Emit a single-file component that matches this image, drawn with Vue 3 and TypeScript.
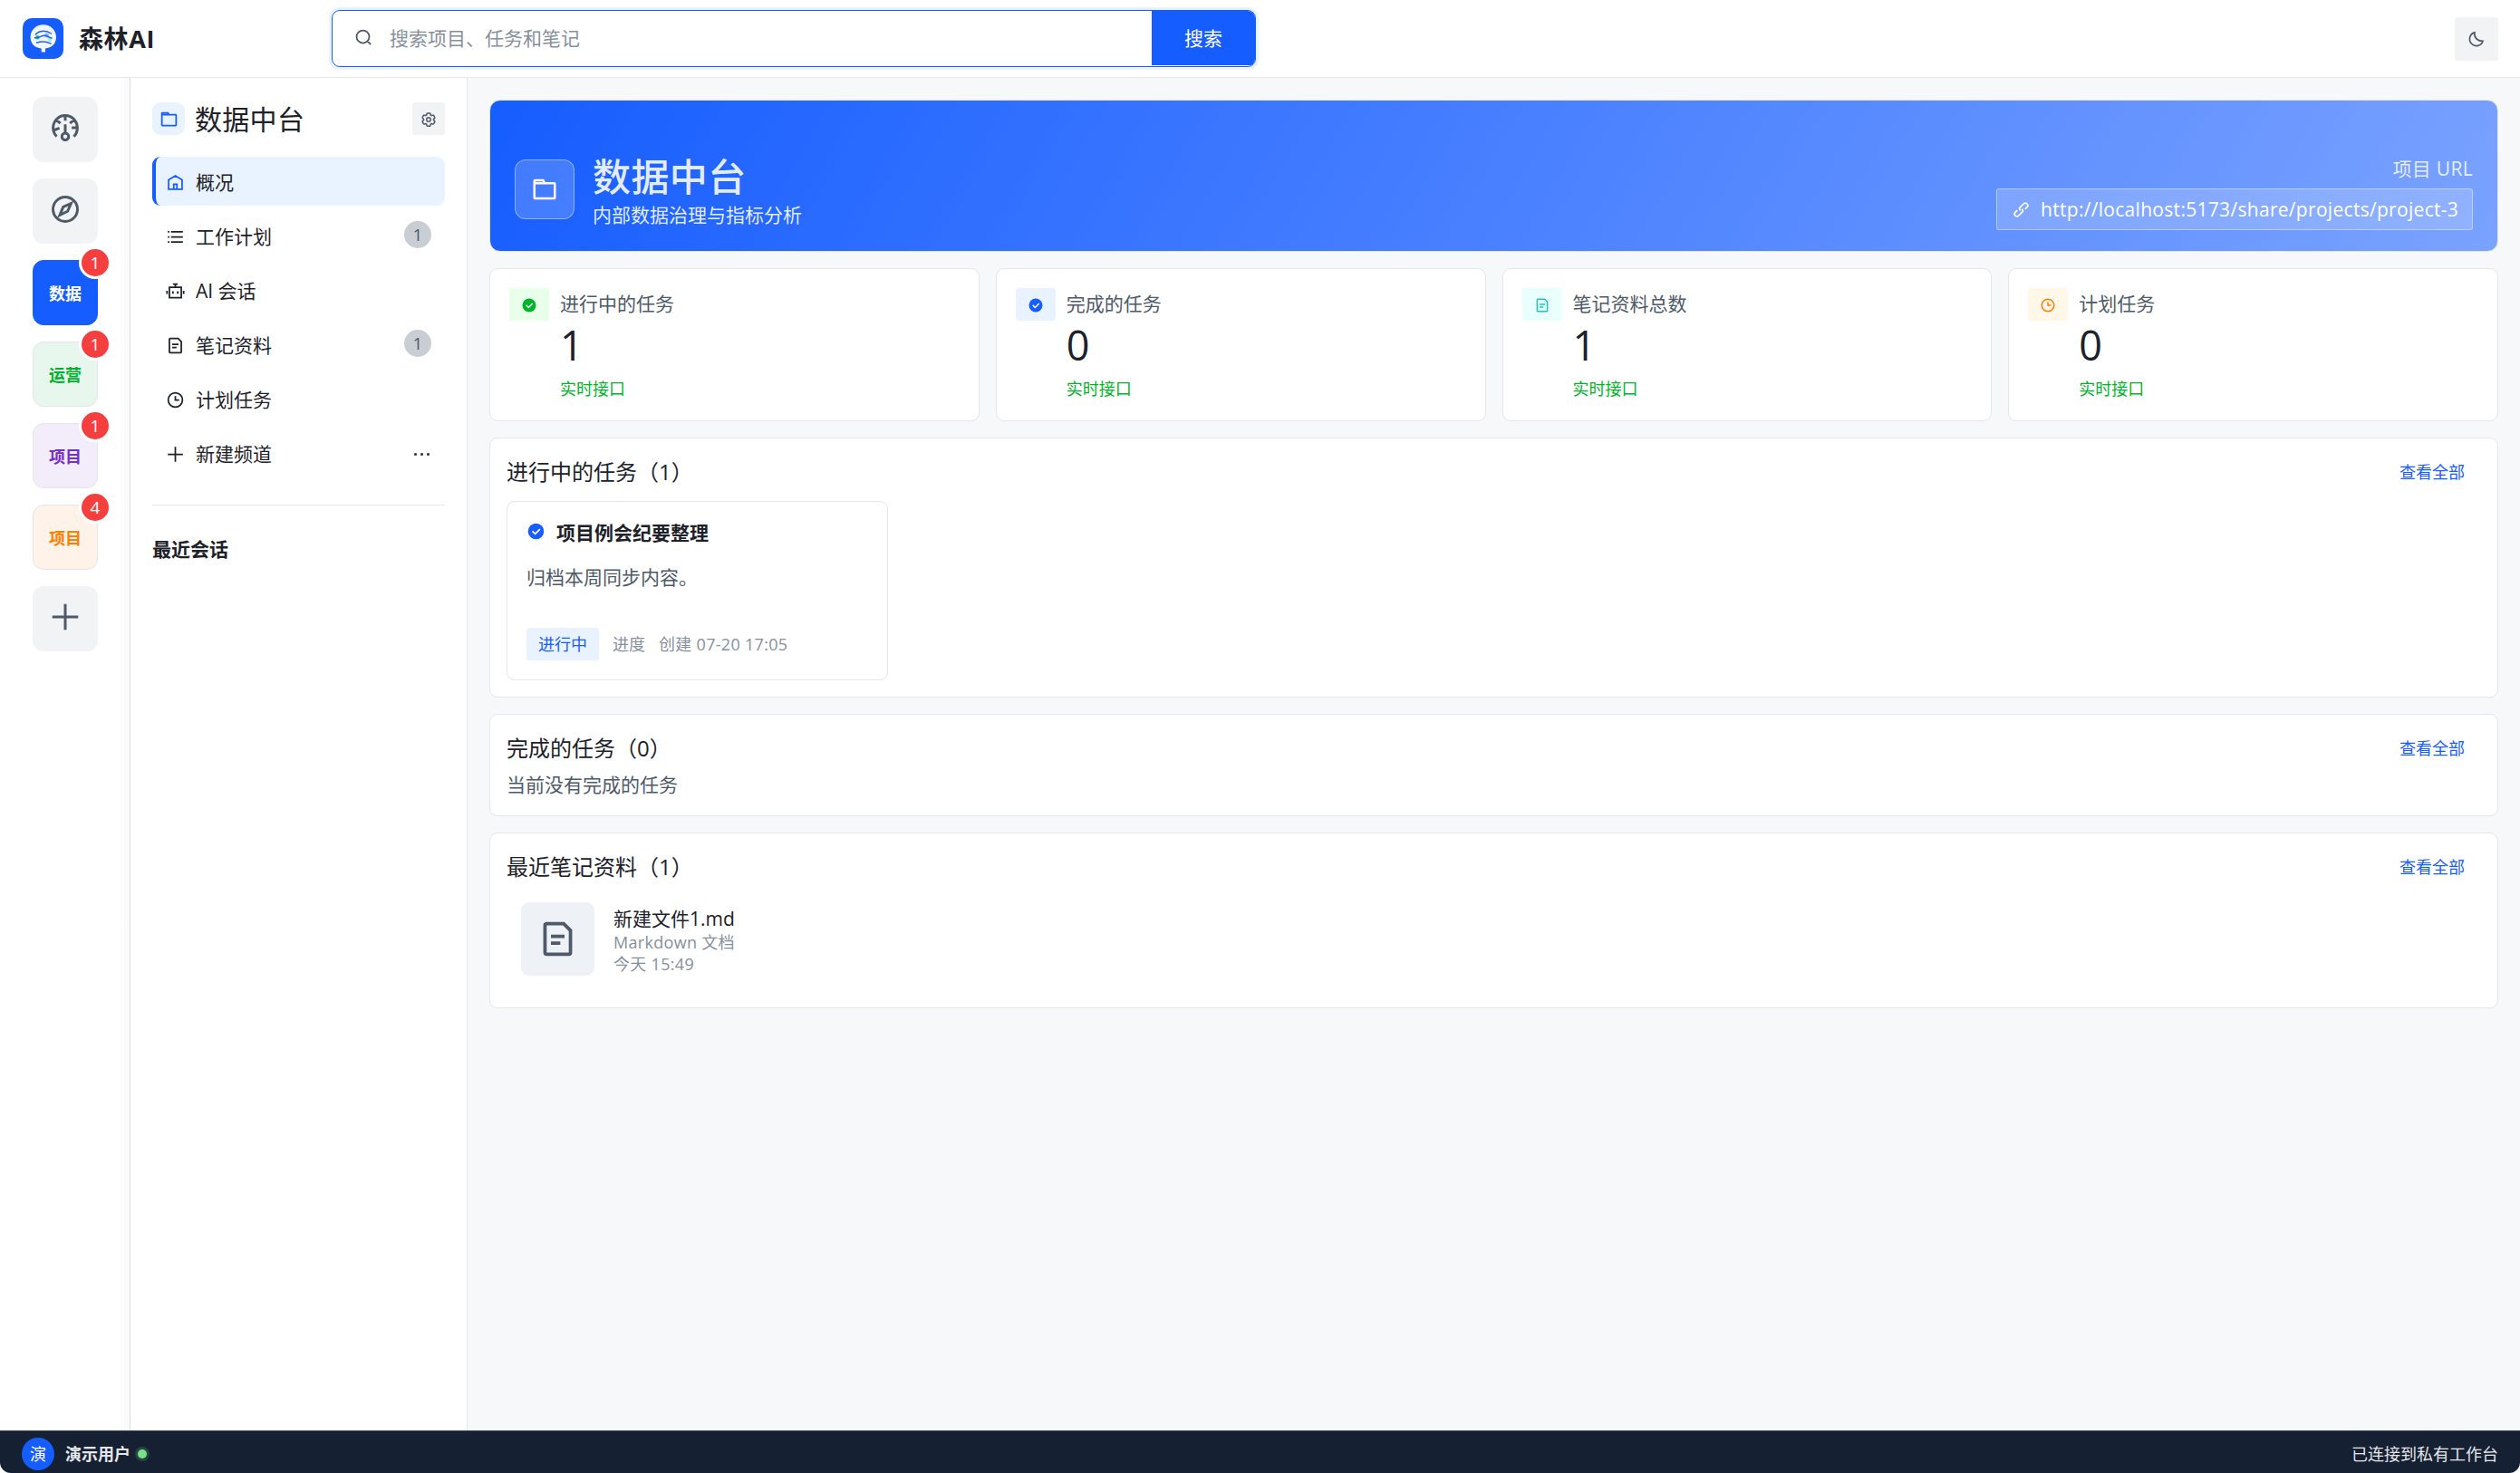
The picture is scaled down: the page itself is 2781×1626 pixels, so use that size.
<script setup lang="ts">
interface RailProject { label: string; badge: number; tone: string }
interface NavItem { label: string; icon: string; badge?: number; active?: boolean; more?: boolean }
interface Stat { label: string; value: number; icon: string; tone: string }

const projects: RailProject[] = [
  { label: '数据', badge: 1, tone: 'blue' },
  { label: '运营', badge: 1, tone: 'green' },
  { label: '项目', badge: 1, tone: 'purple' },
  { label: '项目', badge: 4, tone: 'orange' },
]

const navItems: NavItem[] = [
  { label: '概况', icon: 'home', active: true },
  { label: '工作计划', icon: 'list', badge: 1 },
  { label: 'AI 会话', icon: 'robot' },
  { label: '笔记资料', icon: 'file', badge: 1 },
  { label: '计划任务', icon: 'clock' },
  { label: '新建频道', icon: 'plus', more: true },
]

const stats: Stat[] = [
  { label: '进行中的任务', value: 1, icon: 'check', tone: 'green' },
  { label: '完成的任务', value: 0, icon: 'check', tone: 'blue' },
  { label: '笔记资料总数', value: 1, icon: 'file', tone: 'cyan' },
  { label: '计划任务', value: 0, icon: 'clock', tone: 'orange' },
]

const icons: Record<string, string> = {
  home: 'M7 17 24 7l17 10v24H7V17ZM20 28h8v13h-8V28Z',
  list: 'M13 24h30M5 11h4m4 26h30M13 11h30M5 24h4M5 37h4',
  robot: 'M24 7v6M18 6h12M9 14h30v26H9zM3 23v8m42-8v8M18 24v6m12-6v6',
  file: 'M16 21h16m-16 8h11M11 42h26a2 2 0 0 0 2-2V14l-8-8H11a2 2 0 0 0-2 2v32a2 2 0 0 0 2 2Z',
  clock: 'M24 14v10h9.500M42 24c0 9.941-8.059 18-18 18S6 33.941 6 24 14.059 6 24 6s18 8.059 18 18Z',
  plus: 'M5 24h38M24 5v38',
  folder: 'M6 13h18l-2.500-5H7a1 1 0 0 0-1 1v4Zm0 0v26a1 1 0 0 0 1 1h34a1 1 0 0 0 1-1V14a1 1 0 0 0-1-1H6Z',
}
</script>

<template>
  <div class="window">
    <header class="topbar">
      <div class="brand">
        <svg class="logo" viewBox="0 0 45 45">
          <rect width="45" height="45" rx="10" fill="#165dff" />
          <path d="M22.800 7.200c8 0 14.200 6 14.200 13.800 0 7-5 12-12 12.500V37.500h-4.300V33.500C13.500 33 8.600 28 8.600 21 8.600 13.200 14.800 7.200 22.800 7.200Z" fill="#f2f6ff" />
          <circle cx="16.400" cy="21.300" r="2.300" fill="#16b88a" />
          <circle cx="26.500" cy="19" r="2.500" fill="#8db9ff" />
          <circle cx="30" cy="23.500" r="2.400" fill="#a6ecd2" />
          <g fill="none" stroke="#2464e8" stroke-width="1.500" stroke-linecap="round">
            <path d="M14.300 18C18 13.500 26 13.200 31.500 17" />
            <path d="M13.500 21.800C19 22.500 21 17.800 26 19.500c2.500.8 3 2.300 6 2.500" />
            <path d="M15.500 27.300c5-2 10.500-1.800 15.500.9" />
          </g>
        </svg>
        <span class="brand-name">森林AI</span>
      </div>
      <div class="search">
        <svg class="search-icon" viewBox="0 0 48 48"><path class="stroke" d="M33.072 33.071c6.248-6.248 6.248-16.379 0-22.627-6.249-6.249-16.380-6.249-22.628 0-6.248 6.248-6.248 16.379 0 22.627 6.248 6.248 16.380 6.248 22.628 0Zm0 0 8.485 8.485" /></svg>
        <span class="placeholder">搜索项目、任务和笔记</span>
        <button class="search-btn">搜索</button>
      </div>
      <button class="theme-btn">
        <svg viewBox="0 0 48 48"><path class="stroke" d="M41 29.500A18 18 0 1 1 19 6.800c-2 12.500 7 23.700 22 22.700Z" /></svg>
      </button>
    </header>

    <div class="body">
      <nav class="rail">
        <button class="rail-item">
          <svg viewBox="0 0 48 48"><path class="stroke" d="M41.808 24c.118 4.630-1.486 9.333-5.210 13m5.210-13h-8.309m8.309 0c-.112-4.380-1.767-8.694-4.627-12M24 6c5.531 0 10.070 2.404 13.180 6M24 6c-5.724 0-10.384 2.574-13.500 6.380M24 6v7.500M37.180 12 31 17.500m-20.500-5.120L17 17.500m-6.500-5.120C6.990 16.662 5.440 22.508 6.530 28m4.872 9c-2.650-2.609-4.226-5.742-4.873-9m0 0 8.970-3.500M24 32a5 5 0 1 0 0 10 5 5 0 0 0 0-10Zm0 0V19" /></svg>
        </button>
        <button class="rail-item">
          <svg viewBox="0 0 48 48"><path class="stroke" d="M42 24c0 9.941-8.059 18-18 18S6 33.941 6 24 14.059 6 24 6s18 8.059 18 18ZM21 20.500 32.500 15.500 27.500 27 16 32.500Z" /></svg>
        </button>
        <button v-for="(p, i) in projects" :key="i" class="rail-item project" :class="p.tone">
          {{ p.label }}<span class="rail-badge">{{ p.badge }}</span>
        </button>
        <button class="rail-item">
          <svg viewBox="0 0 48 48"><path class="stroke" :d="icons.plus" /></svg>
        </button>
      </nav>

      <aside class="sidebar">
        <div class="side-head">
          <span class="side-tile"><svg viewBox="0 0 48 48"><path class="stroke" :d="icons.folder" /></svg></span>
          <h2>数据中台</h2>
          <button class="gear">
            <svg viewBox="0 0 48 48">
              <path class="stroke" d="M18.800 6.700C19 5.700 19.800 5 20.800 5h6.400c1 0 1.800.7 2 1.700l.8 3.900 2.700 1.600 3.800-1.300c.9-.3 1.900.1 2.400.9l3.200 5.600c.5.800.3 1.900-.4 2.500l-3 2.600v3.100l3 2.600c.7.600.9 1.700.4 2.500l-3.200 5.600c-.5.800-1.500 1.200-2.400.9l-3.800-1.300-2.700 1.600-.8 3.900c-.2 1-1 1.700-2 1.700h-6.400c-1 0-1.800-.7-2-1.700l-.8-3.900-2.700-1.600-3.800 1.300c-.9.300-1.900-.1-2.400-.9l-3.200-5.600c-.5-.8-.3-1.900.4-2.500l3-2.600v-3.100l-3-2.600c-.7-.6-.9-1.700-.4-2.500l3.200-5.600c.5-.8 1.500-1.200 2.400-.9l3.800 1.300 2.700-1.600Z" />
              <circle class="stroke" cx="24" cy="24" r="6" />
            </svg>
          </button>
        </div>
        <ul class="nav">
          <li v-for="n in navItems" :key="n.label" :class="{ active: n.active }">
            <svg viewBox="0 0 48 48"><path class="stroke" :d="icons[n.icon]" /></svg>
            <span class="nav-label">{{ n.label }}</span>
            <span v-if="n.badge" class="nav-badge">{{ n.badge }}</span>
            <svg v-if="n.more" class="more" viewBox="0 0 48 48"><path fill="currentColor" d="M5 21h6v6H5zM21 21h6v6h-6zM37 21h6v6h-6z" /></svg>
          </li>
        </ul>
        <h3 class="recent">最近会话</h3>
      </aside>

      <main class="main">
        <section class="hero">
          <span class="hero-tile"><svg viewBox="0 0 48 48"><path class="stroke" :d="icons.folder" /></svg></span>
          <div class="hero-text">
            <h1>数据中台</h1>
            <p>内部数据治理与指标分析</p>
          </div>
          <div class="hero-url">
            <span class="url-label">项目 URL</span>
            <a class="url-box">
              <svg viewBox="0 0 48 48"><path class="stroke" d="m14.100 25.414-4.950 4.950a6 6 0 0 0 8.486 8.485l8.485-8.485a6 6 0 0 0 0-8.485m7.779.707 4.950-4.950a6 6 0 1 0-8.486-8.485l-8.485 8.485a6 6 0 0 0 0 8.485" /></svg>
              <span>http://localhost:5173/share/projects/project-3</span>
            </a>
          </div>
        </section>

        <section class="stats">
          <article v-for="s in stats" :key="s.label" class="stat">
            <span class="stat-tile" :class="s.tone">
              <svg viewBox="0 0 48 48">
                <template v-if="s.icon === 'check'">
                  <circle cx="24" cy="24" r="20" fill="currentColor" />
                  <path d="m15 23.500 7 7L34 18.500" fill="none" stroke="#fff" stroke-width="4" />
                </template>
                <path v-else class="stroke" :d="icons[s.icon]" />
              </svg>
            </span>
            <div class="stat-text">
              <span class="stat-label">{{ s.label }}</span>
              <strong>{{ s.value }}</strong>
              <span class="stat-note">实时接口</span>
            </div>
          </article>
        </section>

        <section class="panel running">
          <div class="panel-head"><h2>进行中的任务（1）</h2><a>查看全部</a></div>
          <article class="task">
            <div class="task-title">
              <svg viewBox="0 0 48 48">
                <circle cx="24" cy="24" r="20" fill="#165dff" />
                <path d="m15 23.500 7 7L34 18.500" fill="none" stroke="#fff" stroke-width="4" />
              </svg>
              <b>项目例会纪要整理</b>
            </div>
            <p>归档本周同步内容。</p>
            <div class="task-meta"><span class="tag">进行中</span><span class="progress">进度</span><span class="created">创建 07-20 17:05</span></div>
          </article>
        </section>

        <section class="panel done">
          <div class="panel-head"><h2>完成的任务（0）</h2><a>查看全部</a></div>
          <p class="empty">当前没有完成的任务</p>
        </section>

        <section class="panel notes">
          <div class="panel-head"><h2>最近笔记资料（1）</h2><a>查看全部</a></div>
          <div class="note">
            <span class="note-tile"><svg viewBox="0 0 48 48"><path class="stroke" :d="icons.file" /></svg></span>
            <div class="note-text">
              <span class="note-name">新建文件1.md</span>
              <span class="note-sub">Markdown 文档</span>
              <span class="note-sub">今天 15:49</span>
            </div>
          </div>
        </section>
      </main>
    </div>

    <footer class="status">
      <span class="avatar">演</span>
      <b class="user">演示用户</b>
      <i class="online"></i>
      <span class="conn">已连接到私有工作台</span>
    </footer>
  </div>
</template>

<style>
body { background: #fff; }
</style>

<style scoped>
* { box-sizing: border-box; margin: 0; padding: 0; }
.window {
  width: 2781px; height: 1626px; display: flex; flex-direction: column;
  background: #fff; border-radius: 12px; overflow: hidden;
  font-family: "Open Sans", "Noto Sans CJK SC", sans-serif;
  font-size: 21px; line-height: 30px; color: #1d2129; white-space: nowrap;
}
button { border: 0; background: none; font: inherit; color: inherit; display: flex; align-items: center; justify-content: center; }
svg { display: block; flex: none; }
.stroke { fill: none; stroke: currentColor; stroke-width: 4; }
h1, h2, h3 { font-weight: 400; }

.topbar { height: 86px; flex: none; border-bottom: 1px solid #e5e6eb; display: flex; align-items: center; padding: 0 24px 0 25px; }
.brand { width: 341px; display: flex; align-items: center; gap: 17px; }
.logo { width: 45px; height: 45px; margin-bottom: 1px; }
.brand-name { font-size: 27px; font-weight: 700; line-height: 40px; letter-spacing: 0.6px; }
.search { width: 1020px; height: 63px; border: 1px solid #165dff; border-radius: 9px; box-shadow: 0 0 0 3px #e8f3ff; display: flex; align-items: flex-start; overflow: hidden; padding-left: 24px; }
.search-icon { width: 21px; height: 21px; margin-top: 19px; color: #4e5969; }
.placeholder { margin: 15px 0 0 18px; color: #86909c; flex: 1; }
.search-btn { width: 114px; height: 60px; background: #165dff; color: #fff; }
.theme-btn { width: 48px; height: 48px; margin-left: auto; background: #f2f3f5; border-radius: 3px; color: #4e5969; }
.theme-btn svg { width: 20px; height: 20px; }

.body { flex: 1; display: flex; min-height: 0; }
.rail { width: 144px; flex: none; border-right: 1px solid #dcdee3; padding: 21px 0 0 36px; display: flex; flex-direction: column; gap: 18px; background: linear-gradient(90deg, #fff 130px, #fafafb 143px); }
.rail-item { width: 72px; height: 72px; flex: none; border-radius: 12px; background: #f2f3f5; color: #4e5969; position: relative; }
.rail-item svg { width: 36px; height: 36px; margin-bottom: 4px; }
.project { font-size: 18px; font-weight: 700; border: 1px solid #e5e6eb; padding-top: 2px; }
.project.blue { background: #165dff; border-color: #165dff; color: #fff; }
.project.green { background: #e8f7ee; color: #00b42a; }
.project.purple { background: #f2ecfb; color: #722ed1; }
.project.orange { background: #fff2e8; color: #ff7d00; }
.rail-badge { position: absolute; top: -13px; right: -13px; width: 30px; height: 30px; border-radius: 50%; background: #f53f3f; box-shadow: 0 0 0 3px #fff; color: #fff; font-size: 19px; font-weight: 400; line-height: 30px; text-align: center; }

.sidebar { width: 372px; flex: none; border-right: 1px solid #e5e6eb; padding: 27px 24px 0; }
.side-head { display: flex; align-items: center; height: 36px; }
.side-tile { width: 36px; height: 36px; border-radius: 9px; background: #e8f3ff; color: #165dff; display: flex; align-items: center; justify-content: center; }
.side-tile svg { width: 21px; height: 21px; }
.side-head h2 { font-size: 30px; margin: 2px 0 0 11px; letter-spacing: .3px; }
.gear { width: 36px; height: 36px; margin-left: auto; border-radius: 3px; background: #f2f3f5; color: #4e5969; }
.gear svg { width: 18px; height: 18px; margin-top: 2px; }
.nav { list-style: none; margin-top: 24px; display: flex; flex-direction: column; gap: 6px; border-bottom: 1px solid #e5e6eb; padding-bottom: 30px; }
.nav li { height: 54px; border-radius: 9px; padding: 0 15px 0 11px; border-left: 4px solid transparent; display: flex; align-items: center; }
.nav li.active { background: #e8f3ff; border-left-color: #165dff; }
.nav li.active svg { color: #165dff; }
.nav li svg { width: 21px; height: 21px; margin-top: 2px; }
.nav-label { margin: 2px 0 0 12px; }
.nav-badge { margin: -3px 0 0 auto; width: 30px; height: 30px; border-radius: 50%; background: #c9cdd4; color: #4e5969; font-size: 19px; text-align: center; }
.nav li .more { margin-left: auto; }
.recent { font-weight: 700; font-size: 21px; margin-top: 33px; }

.main { flex: 1; min-width: 0; background: #f7f8fa; padding: 24px 24px 0; display: flex; flex-direction: column; gap: 18px; }
.hero { height: 168px; flex: none; border: 1px solid #e5e6eb; border-radius: 12px; background: linear-gradient(120deg, #165dff, #7aa2ff); background-origin: border-box; color: #fff; display: flex; padding: 0 27px; }
.hero-tile { width: 66px; height: 66px; margin-top: 65px; border-radius: 12px; border: 1px solid rgba(255, 255, 255, .4); background: rgba(255, 255, 255, .18); display: flex; align-items: center; justify-content: center; }
.hero-tile svg { width: 30px; height: 30px; }
.hero-text { margin: 56px 0 0 20px; }
.hero-text h1 { font-size: 42px; line-height: 55px; font-weight: 500; letter-spacing: .4px; color: rgba(255, 255, 255, .88); }
.hero-text p { color: rgba(255, 255, 255, .88); }
.hero-url { margin: 60px 0 0 auto; display: flex; flex-direction: column; align-items: flex-end; }
.url-label { color: rgba(255, 255, 255, .82); letter-spacing: .3px; }
.url-box { margin-top: 7px; width: 526px; height: 46px; border: 1px solid rgba(255, 255, 255, .4); border-radius: 3px; background: rgba(255, 255, 255, .18); display: flex; align-items: center; padding-left: 16px; letter-spacing: .3px; }
.url-box svg { width: 21px; height: 21px; margin-right: 11px; }

.stats { display: grid; grid-template-columns: repeat(4, 1fr); gap: 18px; }
.stat, .panel { background: #fff; border: 1px solid #e5e6eb; border-radius: 9px; }
.stat { height: 169px; padding: 21px; display: flex; }
.stat-tile { width: 44px; height: 36px; border-radius: 3px; display: flex; align-items: center; justify-content: center; }
.stat-tile svg { width: 18px; height: 18px; margin-top: 2px; }
.stat-tile.green { background: #e8ffea; color: #00b42a; }
.stat-tile.blue { background: #e8f3ff; color: #165dff; }
.stat-tile.cyan { background: #e8fffb; color: #14c9c9; }
.stat-tile.orange { background: #fff7e8; color: #ff7d00; }
.stat-text { margin-left: 12px; display: flex; flex-direction: column; }
.stat-label { color: #4e5969; margin-top: 2px; }
.stat-text strong { font-size: 45px; line-height: 60px; font-weight: 400; margin-top: 1px; }
.stat-note { font-size: 18px; color: #00b42a; margin-top: 3px; }

.panel { padding: 18px; flex: none; }
.running { height: 287px; }
.done { height: 113px; }
.notes { height: 194px; }
.panel-head { display: flex; justify-content: space-between; align-items: center; height: 36px; padding: 1px 18px 0 0; }
.panel-head h2 { font-size: 24px; }
.panel-head a { font-size: 18px; color: #165dff; }
.task { margin-top: 15px; width: 421px; height: 198px; border: 1px solid #e5e6eb; border-radius: 9px; padding: 18px 21px; }
.task-title { display: flex; align-items: center; height: 30px; }
.task-title svg { width: 21px; height: 21px; margin-bottom: 1px; }
.task-title b { margin: 1px 0 0 12px; }
.task p { margin-top: 20px; color: #4e5969; }
.task-meta { margin-top: 41px; display: flex; align-items: center; font-size: 18px; color: #86909c; }
.tag { width: 80px; height: 36px; line-height: 36px; border-radius: 3px; background: #e8f3ff; color: #165dff; text-align: center; }
.progress { margin-left: 15px; }
.created { margin-left: 15px; letter-spacing: .3px; }
.empty { color: #4e5969; margin-top: 8px; }
.note { margin: 22px 0 0 16px; display: flex; }
.note-tile { width: 81px; height: 81px; border-radius: 9px; background: #eef1f6; color: #4e5969; display: flex; align-items: center; justify-content: center; }
.note-tile svg { width: 45px; height: 45px; }
.note-text { margin-left: 21px; display: flex; flex-direction: column; padding-top: 4px; }
.note-name { line-height: 28px; }
.note-sub { font-size: 18px; line-height: 24px; color: #86909c; letter-spacing: .3px; }

.status { height: 47px; flex: none; background: #152033; border-top: 1px solid #36414f; display: flex; align-items: center; padding: 3px 24px 0; font-size: 18px; color: #e5e6eb; }
.avatar { width: 36px; height: 36px; border-radius: 50%; background: #165dff; color: #fff; line-height: 36px; text-align: center; }
.user { margin-left: 12px; }
.online { width: 10px; height: 10px; margin-left: 8px; border-radius: 50%; background: #7be188; box-shadow: 0 0 0 3px rgba(123, 225, 136, .18); }
.conn { margin-left: auto; }
</style>
